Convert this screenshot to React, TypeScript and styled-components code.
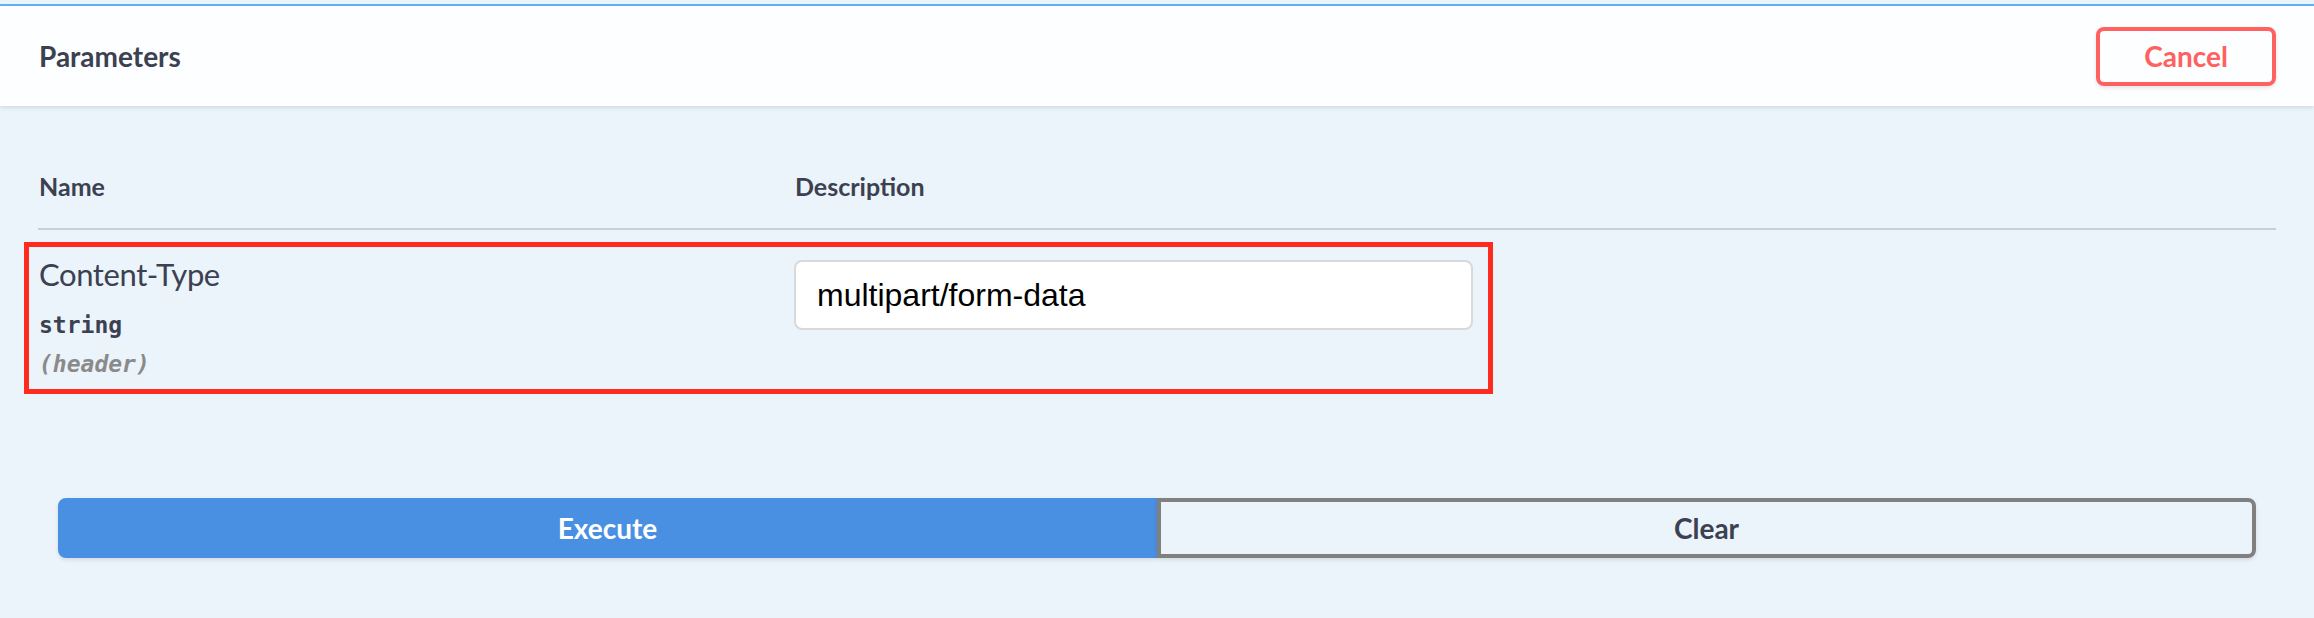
import styled, { createGlobalStyle } from 'styled-components';

const GlobalStyle = createGlobalStyle`
  html, body {
    margin: 0;
    padding: 0;
    background-color: #ebf3fb;
  }
  * {
    box-sizing: border-box;
  }
`;

const Page = styled.div`
  min-height: 618px;
  padding-top: 4px;
  background-color: #ebf3fb;
  font-family: Lato, "Open Sans", sans-serif;
  color: #3b4151;
`;

const OpBlock = styled.div`
  border-top: 2px solid #61affe;
`;

const SectionHeader = styled.div`
  display: flex;
  align-items: center;
  justify-content: space-between;
  height: 100px;
  padding: 0 38px 0 39px;
  background-color: rgba(255, 255, 255, 0.85);
  box-shadow: 0 2px 4px rgba(0, 0, 0, 0.1);
  position: relative;
`;

const SectionTitle = styled.h4`
  margin: 0;
  padding-top: 2px;
  font-size: 28px;
  line-height: 1.2;
  font-weight: 700;
  color: #3b4151;
`;

const Button = styled.button<{ $tone: 'cancel' | 'execute' | 'clear' }>`
  font-family: Lato, "Open Sans", sans-serif;
  font-size: 28px;
  font-weight: 700;
  cursor: pointer;
  border-style: solid;
  border-width: 4px;
  box-shadow: 0 2px 4px rgba(0, 0, 0, 0.1);
  ${({ $tone }) =>
    $tone === 'cancel'
      ? `
    height: 59px;
    padding: 0 44px;
    border-color: #ff6060;
    border-radius: 8px;
    color: #ff6060;
    background: transparent;
  `
      : $tone === 'execute'
      ? `
    flex: 1;
    height: 60px;
    border-color: #4990e2;
    border-radius: 8px 0 0 8px;
    color: #fff;
    background: #4990e2;
  `
      : `
    flex: 1;
    height: 60px;
    border-color: #808080;
    border-radius: 0 8px 8px 0;
    color: #3b4151;
    background: transparent;
  `}
`;

const Body = styled.div`
  padding: 65px 38px 60px 38px;
`;

const HeadRow = styled.div`
  display: grid;
  grid-template-columns: 756px 1fr;
  padding: 0 1px 27px;
  border-bottom: 2px solid #c8cfd9;
`;

const HeadCell = styled.div`
  font-size: 25px;
  line-height: 30px;
  font-weight: 700;
  color: #3b4151;
`;

const ParamRow = styled.div<{ $marked?: boolean }>`
  display: grid;
  grid-template-columns: 755px 679px;
  width: 1469px;
  height: 152px;
  margin: 12px 0 0 -14px;
  padding: 0 0 0 10px;
  border: 5px solid ${({ $marked }) => ($marked ? '#ff2b1f' : 'transparent')};
`;

const NameCell = styled.div`
  display: flex;
  flex-direction: column;
  padding-top: 7px;
`;

const ParamName = styled.div`
  font-size: 31px;
  line-height: 40px;
  font-weight: 400;
  letter-spacing: -0.4px;
  color: #3b4151;
`;

const ParamType = styled.div<{ $muted?: boolean }>`
  font-family: "DejaVu Sans Mono", "Liberation Mono", monospace;
  font-size: 23px;
  line-height: 32px;
  font-weight: 700;
  font-style: ${({ $muted }) => ($muted ? 'italic' : 'normal')};
  color: ${({ $muted }) => ($muted ? '#8a8a8a' : '#3b4151')};
  margin-top: ${({ $muted }) => ($muted ? '7px' : '15px')};
`;

const DescCell = styled.div`
  padding-top: 13px;
`;

const TextInput = styled.input`
  display: block;
  width: 679px;
  height: 70px;
  padding: 0 21px;
  border: 2px solid #d9d9d9;
  border-radius: 8px;
  background: #fff;
  font-family: "Liberation Sans", Arial, sans-serif;
  font-size: 32px;
  color: #000;
  outline: none;
`;

const ExecuteWrapper = styled.div`
  display: flex;
  margin: 104px 20px 0;
`;

export default function App() {
  return (
    <Page>
      <GlobalStyle />
      <OpBlock>
        <SectionHeader>
          <SectionTitle>Parameters</SectionTitle>
          <Button $tone="cancel">Cancel</Button>
        </SectionHeader>
        <Body>
          <HeadRow>
            <HeadCell>Name</HeadCell>
            <HeadCell>Description</HeadCell>
          </HeadRow>
          <ParamRow $marked>
            <NameCell>
              <ParamName>Content-Type</ParamName>
              <ParamType>string</ParamType>
              <ParamType $muted>(header)</ParamType>
            </NameCell>
            <DescCell>
              <TextInput defaultValue="multipart/form-data" />
            </DescCell>
          </ParamRow>
          <ExecuteWrapper>
            <Button $tone="execute">Execute</Button>
            <Button $tone="clear">Clear</Button>
          </ExecuteWrapper>
        </Body>
      </OpBlock>
    </Page>
  );
}
